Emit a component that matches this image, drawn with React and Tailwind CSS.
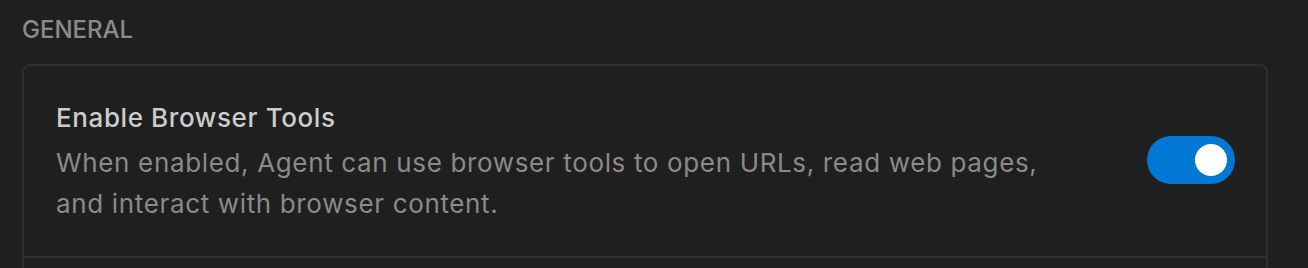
export default function App() {
  return (
    <div className="h-[268px] overflow-hidden bg-[#1f1f1f] pl-[22px] pr-[40px] pt-[14px] font-['Inter','Noto_Sans',sans-serif] antialiased">
      <div className="text-[24px] leading-8 font-medium text-[#8b8b8b]">GENERAL</div>

      <div className="mt-[18px] rounded-lg border-2 border-[#2e2e2e]">
        {/* browser tools row */}
        <div className="flex items-center justify-between pl-8 pr-[31px] pt-[34px] pb-[32px] border-b-2 border-[#2e2e2e]">
          <div className="max-w-[1010px]">
            <div className="text-[26px] leading-[36px] font-medium tracking-[0.6px] text-[#cccccc]">Enable Browser Tools</div>
            <div className="mt-[6px] text-[26px] leading-[41px] tracking-[0.65px] text-[#8a8a8a]">
              When enabled, Agent can use browser tools to open URLs, read web pages, and interact with browser content.
            </div>
          </div>
          <button className="mb-[4px] flex h-[48px] w-[88px] shrink-0 items-center justify-end rounded-full bg-[#0277d4] pr-2">
            <span className="h-8 w-8 rounded-full bg-white" />
          </button>
        </div>
        {/* next row continues below the window */}
        <div className="h-[60px]" />
      </div>
    </div>
  );
}
